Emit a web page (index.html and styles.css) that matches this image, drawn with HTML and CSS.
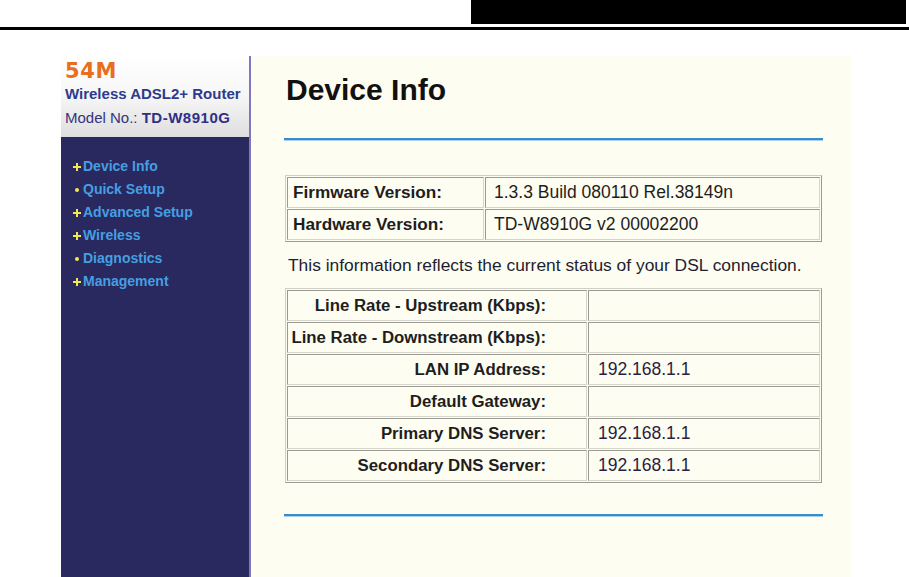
FILE: index.html
```html
<!DOCTYPE html>
<html>
<head>
<meta charset="utf-8">
<link rel="stylesheet" href="styles.css">
</head>
<body>
<div class="top"><div class="blackbox"></div></div>
<div class="rule"></div>
<div class="frame">
  <div class="side">
    <div class="brand">
      <div class="b54">54M</div>
      <div class="bname">Wireless ADSL2+ Router</div>
      <div class="bmodel">Model No.: <b>TD-W8910G</b></div>
    </div>
    <ul class="nav">
      <li><span class="plus"></span>Device Info</li>
      <li><span class="dot"></span>Quick Setup</li>
      <li><span class="plus"></span>Advanced Setup</li>
      <li><span class="plus"></span>Wireless</li>
      <li><span class="dot"></span>Diagnostics</li>
      <li><span class="plus"></span>Management</li>
    </ul>
  </div>
  <div class="main">
    <h1 class="title">Device Info</h1>
    <div class="bline"></div>
    <table class="grid t1">
      <tr><td class="lab">Firmware Version:</td><td class="val">1.3.3 Build 080110 Rel.38149n</td></tr>
      <tr><td class="lab">Hardware Version:</td><td class="val">TD-W8910G v2 00002200</td></tr>
    </table>
    <p class="note">This information reflects the current status of your DSL connection.</p>
    <table class="grid t2">
      <tr><td class="lab r">Line Rate - Upstream (Kbps):</td><td class="val"></td></tr>
      <tr><td class="lab r">Line Rate - Downstream (Kbps):</td><td class="val"></td></tr>
      <tr><td class="lab r">LAN IP Address:</td><td class="val">192.168.1.1</td></tr>
      <tr><td class="lab r">Default Gateway:</td><td class="val"></td></tr>
      <tr><td class="lab r">Primary DNS Server:</td><td class="val">192.168.1.1</td></tr>
      <tr><td class="lab r">Secondary DNS Server:</td><td class="val">192.168.1.1</td></tr>
    </table>
    <div class="bline bottom"></div>
  </div>
</div>
</body>
</html>
```
FILE: styles.css
```css
html, body { margin: 0; padding: 0; background: #ffffff; }
body { font-family: "Liberation Sans", Arial, sans-serif; width: 909px; height: 577px; overflow: hidden; }

.top { height: 24px; padding-left: 471px; }
.blackbox { width: 435px; height: 24px; background: #000; }
.rule { margin-top: 3px; height: 3px; background: #000; }

.frame { display: flex; margin: 26px 0 0 61px; width: 790px; height: 521px; }

.side { width: 188px; background: #29295f; border-right: 2px solid #8078bf; display: flex; flex-direction: column; }
.brand { height: 81px; background: linear-gradient(#ffffff 0%, #f6f6f6 50%, #dedede 100%); padding: 4px 0 0 4px; box-sizing: border-box; }
.b54 { font-family: "DejaVu Sans", sans-serif; font-weight: bold; font-size: 21px; line-height: 23px; color: #ea6f1c; letter-spacing: 0.6px; }
.bname { font-weight: bold; font-size: 15px; line-height: 18px; color: #2e3a8c; margin-top: 2px; }
.bmodel { font-size: 15px; line-height: 18px; color: #34347e; margin-top: 6px; }
.bmodel b { color: #2f2f86; letter-spacing: 0.5px; }

.nav { list-style: none; margin: 0; padding: 18px 0 0 12px; }
.nav li { font-weight: bold; font-size: 14px; line-height: 23px; color: #459fe2; display: flex; align-items: center; }
.plus { width: 8px; height: 8px; margin-right: 2px; position: relative; flex: none; }
.plus::before, .plus::after { content: ""; position: absolute; background: #f4e650; }
.plus::before { left: 3px; top: 0; width: 2px; height: 8px; }
.plus::after { left: 0; top: 3px; width: 8px; height: 2px; }
.dot { width: 4px; height: 4px; border-radius: 50%; background: #f4e650; margin: 0 4px 0 2px; flex: none; }

.main { flex: 1; background: #fdfdf1; padding: 17px 0 0 33px; }
.title { margin: 0; font-size: 30px; line-height: 34px; font-weight: bold; color: #111; padding-left: 2px; }
.bline { width: 539px; height: 2px; background: #3b8bc7; border-bottom: 1px solid #a9d0ec; margin-top: 31px; }
.bline.bottom { margin-top: 31px; }

.grid { border-collapse: separate; border-spacing: 1px; width: 537px; margin-left: 1px;
  border: 1px solid; border-color: #cfcfc6 #9a9a92 #9a9a92 #cfcfc6; font-size: 17.5px; color: #1e1e1e; }
.grid td { border: 1px solid; border-color: #9a9a92 #d6d6cc #d6d6cc #9a9a92; padding: 0; }
.t1 { margin-top: 34px; }
.t1 td { height: 29px; }
.t1 .lab { width: 190px; padding-left: 5px; font-weight: bold; font-size: 17.2px; }
.t1 .val { padding-left: 8px; }
.note { margin: 13px 0 0 4px; font-size: 17.4px; line-height: 20px; color: #1e1e30; }
.t2 { margin-top: 13px; }
.t2 td { height: 29px; }
.t2 .lab { width: 258px; padding-right: 40px; font-weight: bold; font-size: 16.8px; text-align: right; }
.t2 .val { padding-left: 9px; color: #2a1e40; }
```
